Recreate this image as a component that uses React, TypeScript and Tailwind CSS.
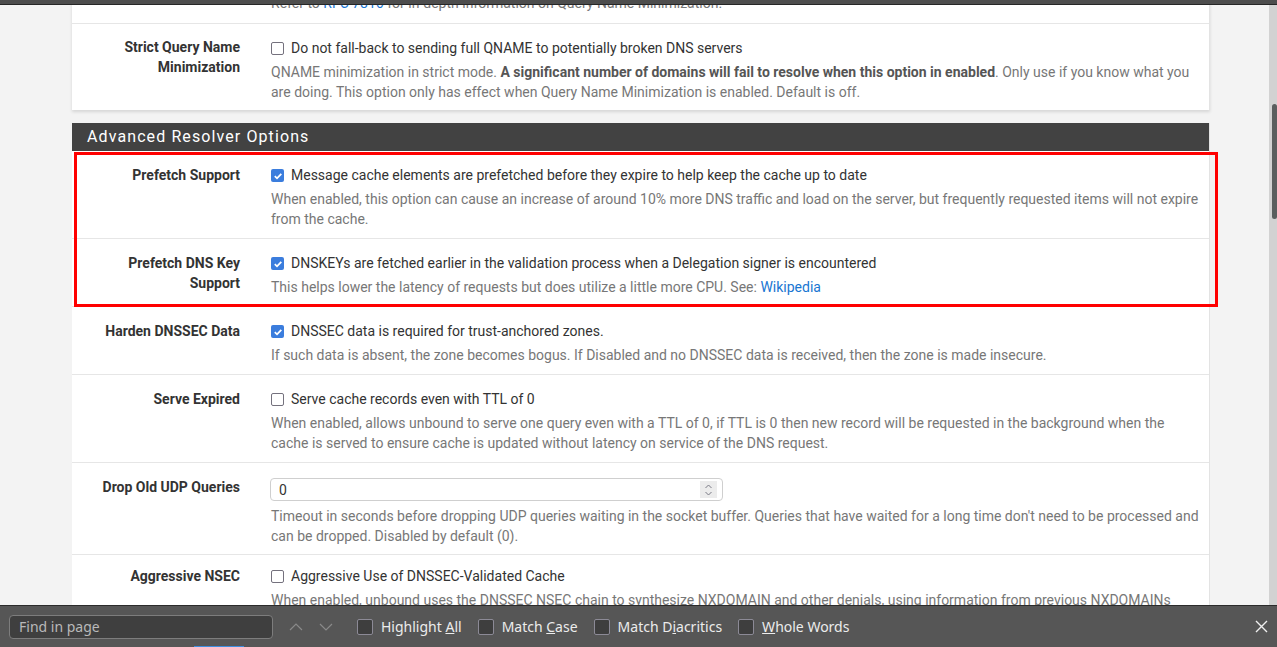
import type { ReactNode } from 'react';

function Check({ checked }: { checked?: boolean }) {
  if (checked) {
    return (
      <span className="mt-[4px] mr-[7px] flex h-[13px] w-[13px] shrink-0 items-center justify-center rounded-[2px] bg-[#3b7ddd]">
        <svg width="10" height="10" viewBox="0 0 10 10">
          <path d="M1.8 5.2 L4 7.3 L8.3 2.8" fill="none" stroke="#fff" strokeWidth="1.8" />
        </svg>
      </span>
    );
  }
  return (
    <span className="mt-[4px] mr-[7px] h-[13px] w-[13px] shrink-0 rounded-[2px] border-[1.5px] border-[#74717d] bg-white" />
  );
}

function Row({ label, children, pt = 'pt-[14px]', pb = 'pb-[9px]' }: { label: ReactNode; children: ReactNode; pt?: string; pb?: string }) {
  return (
    <div className={`flex border-b border-[#e6e6e6] ${pt} ${pb}`}>
      <div className="w-[168px] shrink-0 pl-[8px] text-right text-[14px] leading-5 font-bold text-[#333]">
        {label}
      </div>
      <div className="ml-[31px] flex-1 pr-[10px] text-[14px] leading-5">{children}</div>
    </div>
  );
}

function Option({ checked, text }: { checked?: boolean; text: string }) {
  return (
    <div className="flex items-start text-[#333]">
      <Check checked={checked} />
      <span>{text}</span>
    </div>
  );
}

function Help({ children, mt = 'mt-[4px]' }: { children: ReactNode; mt?: string }) {
  return <p className={`${mt} text-[#777]`}>{children}</p>;
}

function FindCheck({ label }: { label: ReactNode }) {
  return (
    <div className="flex items-center gap-[8px]">
      <span className="h-[16px] w-[16px] rounded-[2px] border-[1.5px] border-[#8c8a96] bg-[#3e3e3e]" />
      <span className="text-[#ececec]">{label}</span>
    </div>
  );
}

export default function App() {
  return (
    <div className="flex h-[647px] w-[1277px] flex-col overflow-hidden bg-[#f3f3f3] font-['Roboto',sans-serif]">
      <div className="h-[5px] shrink-0 border-b border-[#262626] bg-[#4d4d4d]" />

      <div className="flex h-[600px] shrink-0 overflow-hidden">
        <div className="w-[72px] shrink-0" />
        <div className="w-[1138px] shrink-0">
          {/* upper panel, scrolled part way */}
          <div className="-mt-[12px] border-r border-[#e3e3e3] bg-white shadow-[0_2px_3px_rgba(0,0,0,0.12)]">
            <div className="flex border-b border-[#e6e6e6] pb-[10px]">
              <div className="w-[168px] shrink-0" />
              <div className="ml-[31px] text-[14px] leading-5 text-[#777]">
                Refer to <span className="text-[#1976d2]">RFC 7816</span> for in-depth information on Query Name
                Minimization.
              </div>
            </div>
            <div className="flex pt-[14px] pb-[8px]">
              <div className="-mt-[1px] w-[168px] shrink-0 text-right text-[14px] leading-5 font-bold text-[#333]">
                Strict Query Name
                <br />
                Minimization
              </div>
              <div className="ml-[31px] flex-1 pr-[10px] text-[14px] leading-5">
                <Option text="Do not fall-back to sending full QNAME to potentially broken DNS servers" />
                <Help>
                  QNAME minimization in strict mode.{' '}
                  <b className="text-[#555]">
                    A significant number of domains will fail to resolve when this option in enabled
                  </b>
                  . Only use if you know what you are doing. This option only has effect when Query Name Minimization
                  is enabled. Default is off.
                </Help>
              </div>
            </div>
          </div>

          {/* Advanced Resolver Options */}
          <div className="relative mt-[13px] border-r border-[#e3e3e3] bg-white">
            <div className="flex h-[28px] items-center bg-[#424242] pl-[15px] text-[16px] tracking-[1.1px] text-white">
              Advanced Resolver Options
            </div>

            <Row label="Prefetch Support">
              <Option
                checked
                text="Message cache elements are prefetched before they expire to help keep the cache up to date"
              />
              <Help>
                When enabled, this option can cause an increase of around 10% more DNS traffic and load on the server,
                but frequently requested items will not expire from the cache.
              </Help>
            </Row>

            <Row
              label={
                <>
                  Prefetch DNS Key
                  <br />
                  Support
                </>
              }
            >
              <Option
                checked
                text="DNSKEYs are fetched earlier in the validation process when a Delegation signer is encountered"
              />
              <Help>
                This helps lower the latency of requests but does utilize a little more CPU. See:{' '}
                <span className="text-[#1976d2]">Wikipedia</span>
              </Help>
            </Row>

            <Row label="Harden DNSSEC Data">
              <Option checked text="DNSSEC data is required for trust-anchored zones." />
              <Help>
                If such data is absent, the zone becomes bogus. If Disabled and no DNSSEC data is received, then the
                zone is made insecure.
              </Help>
            </Row>

            <Row label="Serve Expired">
              <Option text="Serve cache records even with TTL of 0" />
              <Help>
                When enabled, allows unbound to serve one query even with a TTL of 0, if TTL is 0 then new record will
                be requested in the background when the cache is served to ensure cache is updated without latency on
                service of the DNS request.
              </Help>
            </Row>

            <Row label="Drop Old UDP Queries" pb="pb-[8px]">
              <div className="mt-[1px] flex h-[23px] w-[453px] -translate-x-[1px] items-center justify-between rounded-[4px] border border-[#cfcfcf] bg-white pr-[5px] pl-[8px] text-[#333]">
                <span>0</span>
                <span className="flex h-[17px] w-[17px] flex-col items-center justify-center bg-[#ececec]">
                  <svg width="9" height="14" viewBox="0 0 9 14">
                    <path d="M1.5 5 L4.5 2 L7.5 5 M1.5 9 L4.5 12 L7.5 9" fill="none" stroke="#7a7a85" strokeWidth="1" />
                  </svg>
                </span>
              </div>
              <Help mt="mt-[5px]">
                Timeout in seconds before dropping UDP queries waiting in the socket buffer. Queries that have waited
                for a long time don't need to be processed and can be dropped. Disabled by default (0).
              </Help>
            </Row>

            <Row label="Aggressive NSEC" pt="pt-[11px]">
              <Option text="Aggressive Use of DNSSEC-Validated Cache" />
              <Help>
                When enabled, unbound uses the DNSSEC NSEC chain to synthesize NXDOMAIN and other denials, using
                information from previous NXDOMAINs answers. It helps to reduce the query rate towards targets that
                get a very high nonexistent name lookup rate.
              </Help>
            </Row>

            <div className="pointer-events-none absolute top-[29px] left-[2px] h-[155px] w-[1144px] border-[3px] border-[#ff0000]" />
          </div>
        </div>
        <div className="w-[59px] shrink-0" />
        <div className="relative w-[8px] shrink-0 bg-[#d2d2d2]">
          <div className="absolute top-[99px] right-0 h-[115px] w-[5px] rounded-[3px] bg-[#5a5e5e]" />
        </div>
      </div>

      {/* find bar */}
      <div className="relative flex h-[42px] shrink-0 items-center border-t border-[#2b2b2b] bg-[#565656] font-['Noto_Sans',sans-serif] text-[14px]">
        <div className="ml-[9px] flex h-[24px] w-[264px] items-center rounded-[4px] border border-[#7d7d7d] bg-[#3f3f3f] pl-[9px] text-[#b9b9b9]">
          Find in page
        </div>
        <div className="ml-[16px] flex items-center gap-[16px]">
          <svg width="14" height="8" viewBox="0 0 14 8">
            <path d="M1 7 L7 1 L13 7" fill="none" stroke="#8a8a8a" strokeWidth="1.2" />
          </svg>
          <svg width="14" height="8" viewBox="0 0 14 8">
            <path d="M1 1 L7 7 L13 1" fill="none" stroke="#8a8a8a" strokeWidth="1.2" />
          </svg>
        </div>
        <div className="ml-[24px] flex items-center gap-[16px]">
          <FindCheck
            label={
              <>
                Highlight <u>A</u>ll
              </>
            }
          />
          <FindCheck
            label={
              <>
                Match <u>C</u>ase
              </>
            }
          />
          <FindCheck
            label={
              <>
                Match D<u>i</u>acritics
              </>
            }
          />
          <FindCheck
            label={
              <>
                <u>W</u>hole Words
              </>
            }
          />
        </div>
        <svg className="absolute right-[9px]" width="13" height="13" viewBox="0 0 13 13">
          <path d="M1 1 L12 12 M12 1 L1 12" fill="none" stroke="#f0f0f0" strokeWidth="1.4" />
        </svg>
        <div className="absolute bottom-0 left-[194px] h-[1px] w-[50px] bg-[#3d8ee0]" />
      </div>
    </div>
  );
}
